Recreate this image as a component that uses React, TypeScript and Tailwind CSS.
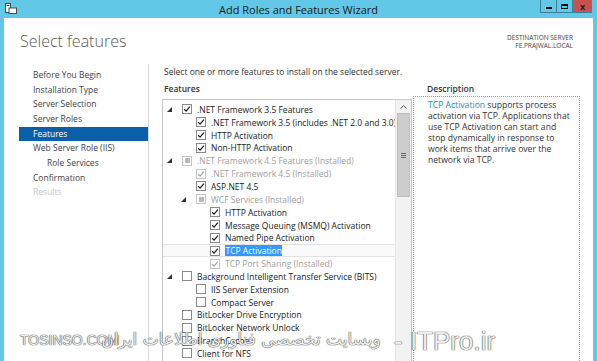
import React from "react";

type Row = {
  lvl: number;
  exp?: boolean;
  state: "checked" | "partial" | "none";
  disabled?: boolean;
  selected?: boolean;
  text: string;
};

const rows: Row[] = [
  { lvl: 0, exp: true, state: "checked", text: ".NET Framework 3.5 Features" },
  { lvl: 1, state: "checked", text: ".NET Framework 3.5 (includes .NET 2.0 and 3.0)" },
  { lvl: 1, state: "checked", text: "HTTP Activation" },
  { lvl: 1, state: "checked", text: "Non-HTTP Activation" },
  { lvl: 0, exp: true, state: "partial", disabled: true, text: ".NET Framework 4.5 Features (Installed)" },
  { lvl: 1, state: "checked", disabled: true, text: ".NET Framework 4.5 (Installed)" },
  { lvl: 1, state: "checked", text: "ASP.NET 4.5" },
  { lvl: 1, exp: true, state: "partial", disabled: true, text: "WCF Services (Installed)" },
  { lvl: 2, state: "checked", text: "HTTP Activation" },
  { lvl: 2, state: "checked", text: "Message Queuing (MSMQ) Activation" },
  { lvl: 2, state: "checked", text: "Named Pipe Activation" },
  { lvl: 2, state: "checked", selected: true, text: "TCP Activation" },
  { lvl: 2, state: "checked", disabled: true, text: "TCP Port Sharing (Installed)" },
  { lvl: 0, exp: true, state: "none", text: "Background Intelligent Transfer Service (BITS)" },
  { lvl: 1, state: "none", text: "IIS Server Extension" },
  { lvl: 1, state: "none", text: "Compact Server" },
  { lvl: 0, state: "none", text: "BitLocker Drive Encryption" },
  { lvl: 0, state: "none", text: "BitLocker Network Unlock" },
  { lvl: 0, state: "none", text: "BranchCache" },
  { lvl: 0, state: "none", text: "Client for NFS" },
];

const nav = [
  { t: "Before You Begin" },
  { t: "Installation Type" },
  { t: "Server Selection" },
  { t: "Server Roles" },
  { t: "Features", sel: true },
  { t: "Web Server Role (IIS)" },
  { t: "Role Services", indent: true },
  { t: "Confirmation" },
  { t: "Results", dim: true },
];

const descLines = [
  "activation via TCP. Applications that",
  "use TCP Activation can start and",
  "stop dynamically in response to",
  "work items that arrive over the",
  "network via TCP.",
];

function Check({ state, disabled }: { state: Row["state"]; disabled?: boolean }) {
  const border = disabled ? "border-[#c4c4c4]" : "border-[#8a8a8a]";
  const stroke = disabled ? "#a8a8a8" : "#222";
  return (
    <div className={`w-[10px] h-[10px] border ${border} bg-white flex items-center justify-center shrink-0`}>
      {state === "checked" && (
        <svg width="8" height="8" viewBox="0 0 8 8">
          <path d="M1.2 4.2 L3.1 6.1 L6.9 1.6" fill="none" stroke={stroke} strokeWidth="1.3" />
        </svg>
      )}
      {state === "partial" && <div className="w-[5px] h-[5px] bg-[#b8b8b8]" />}
    </div>
  );
}

function Expander() {
  return (
    <svg width="5" height="5" viewBox="0 0 5 5" className="ml-[1px]">
      <path d="M5 0 L5 5 L0 5 Z" fill="#333" />
    </svg>
  );
}

export default function App() {
  return (
    <div className="w-[597px] h-[361px] bg-[#62c8e7] relative overflow-hidden font-['Open_Sans',sans-serif]">
      {/* Title bar */}
      <div className="h-[18px] relative flex items-center">
        <div className="absolute left-[5px] top-[3px]">
          <svg width="12" height="11" viewBox="0 0 12 11">
            <rect x="0.5" y="0.5" width="5" height="9" fill="#fff" stroke="#355" strokeWidth="1" />
            <rect x="4" y="5" width="7.5" height="5.5" fill="#fff" stroke="#355" strokeWidth="1" />
            <rect x="1.5" y="2" width="3" height="1" fill="#355" />
          </svg>
        </div>
        <div className="w-full text-center text-[11px] text-[#1a1a1a] leading-none pt-[1px]">
          Add Roles and Features Wizard
        </div>
        <div className="absolute right-[5px] top-0 flex h-[13px]">
          <div className="w-[16px] h-[13px] border-l border-b border-[#3c7f98] flex items-center justify-center">
            <div className="w-[6px] h-[2px] bg-[#111] mt-[3px]" />
          </div>
          <div className="w-[16px] h-[13px] border-l border-b border-[#3c7f98] flex items-center justify-center">
            <div className="w-[7px] h-[5px] border border-[#111] border-t-2" />
          </div>
          <div className="w-[20px] h-[13px] bg-[#c8524f] border-l border-b border-[#3c7f98] flex items-center justify-center">
            <span className="text-[9px] leading-none font-bold text-[#222]">x</span>
          </div>
        </div>
      </div>

      {/* Window content */}
      <div className="absolute left-[4px] right-[4px] top-[18px] bottom-0 bg-white flex flex-col">
        {/* Header */}
        <div className="h-[46px] flex justify-between">
          <div className="pl-[16px] pt-[13px] text-[16px] leading-[20px] text-[#5a5a5a] font-light">
            Select features
          </div>
          <div className="pr-[20px] pt-[16px] text-right text-[6.5px] leading-[8px] text-[#444]">
            <div>DESTINATION SERVER</div>
            <div>FE.PRAJWAL.LOCAL</div>
          </div>
        </div>

        {/* Body */}
        <div className="flex flex-1 min-h-0">
          {/* Nav */}
          <div className="w-[145px] shrink-0 pt-[4px] border-r border-[#d9d9d9] text-[8.5px]">
            {nav.map((n, i) => (
              <div
                key={i}
                className={`h-[14.7px] flex items-center ml-[15px] ${
                  n.sel ? "bg-[#0b5fa8] text-white" : n.dim ? "text-[#c8c8c8]" : "text-[#444]"
                } ${n.indent ? "pl-[28px]" : "pl-[14px]"}`}
              >
                {n.t}
              </div>
            ))}
          </div>

          {/* Main */}
          <div className="flex-1 min-w-0 pl-[13px] flex flex-col">
            <div className="pl-[2px] pt-[1px] h-[14px] text-[8.5px] text-[#333] leading-[14px]">
              Select one or more features to install on the selected server.
            </div>
            <div className="flex flex-1 min-h-0 mt-[4px]">
              {/* Features column */}
              <div className="w-[250px] shrink-0 flex flex-col">
                <div className="pl-[2px] h-[14px] text-[8.5px] font-semibold text-[#333] leading-[14px]">Features</div>
                <div className="mt-[3px] flex-1 border border-[#c8c8c8] border-b-0 relative overflow-hidden">
                  <div className="pt-[3px] pr-[16px]">
                    {rows.map((r, i) => (
                      <div
                        key={i}
                        className={`h-[12.85px] flex items-center ${
                          r.selected ? "border-y border-[#e2e2e2] bg-[#fafafa]" : ""
                        }`}
                        style={{ paddingLeft: 3 + r.lvl * 14 }}
                      >
                        <div className="w-[16px] shrink-0 flex items-center">{r.exp && <Expander />}</div>
                        <Check state={r.state} disabled={r.disabled} />
                        <span
                          className={`ml-[5px] text-[8.5px] whitespace-nowrap leading-[11px] ${
                            r.selected
                              ? "bg-[#3399ff] text-white px-[0.5px]"
                              : r.disabled
                              ? "text-[#a0a0a0]"
                              : "text-[#222]"
                          }`}
                        >
                          {r.text}
                        </span>
                      </div>
                    ))}
                  </div>
                  {/* Scrollbar */}
                  <div className="absolute right-0 top-0 bottom-0 w-[16px] bg-[#f2f2f2] border-l border-[#e6e6e6] flex flex-col">
                    <div className="h-[13px] flex items-center justify-center">
                      <svg width="7" height="4" viewBox="0 0 7 4">
                        <path d="M0.5 3.5 L3.5 0.6 L6.5 3.5" fill="none" stroke="#555" strokeWidth="1" />
                      </svg>
                    </div>
                    <div className="mx-[1px] h-[84px] bg-[#cdcdcd] border border-[#bdbdbd] flex items-center justify-center">
                      <div className="flex flex-col gap-[1px]">
                        <div className="w-[5px] h-[1px] bg-[#666]" />
                        <div className="w-[5px] h-[1px] bg-[#666]" />
                        <div className="w-[5px] h-[1px] bg-[#666]" />
                      </div>
                    </div>
                  </div>
                </div>
              </div>

              {/* Description column */}
              <div className="ml-[1px] w-[167px] shrink-0 flex flex-col">
                <div className="pl-[14px] h-[14px] text-[8.5px] font-semibold text-[#333] leading-[14px]">Description</div>
                <div className="flex-1 border border-dotted border-[#9a9a9a] border-b-0 pl-[14px] pr-[2px] pt-[3px] text-[8.6px] leading-[11px] text-[#333] whitespace-nowrap">
                  <div>
                    <span className="text-[#2e8c9e]">TCP Activation</span> supports process
                  </div>
                  {descLines.map((l, i) => (
                    <div key={i}>{l}</div>
                  ))}
                </div>
              </div>
            </div>
          </div>
        </div>
      </div>

      {/* Watermark */}
      <div className="absolute inset-x-0 top-[328px] h-[26px] text-[#ececec] [text-shadow:0_0_1px_#333,0_0_1px_#333]">
        <span className="absolute left-[20px] top-[5px] font-['Liberation_Sans',sans-serif] text-[14px] leading-none">
          TOSINSO.COM
        </span>
        <span
          dir="rtl"
          className="absolute left-[95px] top-[3px] w-[292px] text-center font-['DejaVu_Sans',sans-serif] text-[17px] leading-none whitespace-nowrap"
        >
          وبسایت تخصصی فناوری اطلاعات ایران
        </span>
        <span className="absolute left-[394px] top-[0px] font-['Liberation_Sans',sans-serif] text-[26px] leading-none whitespace-nowrap">
          - ITPro.ir
        </span>
      </div>
    </div>
  );
}
